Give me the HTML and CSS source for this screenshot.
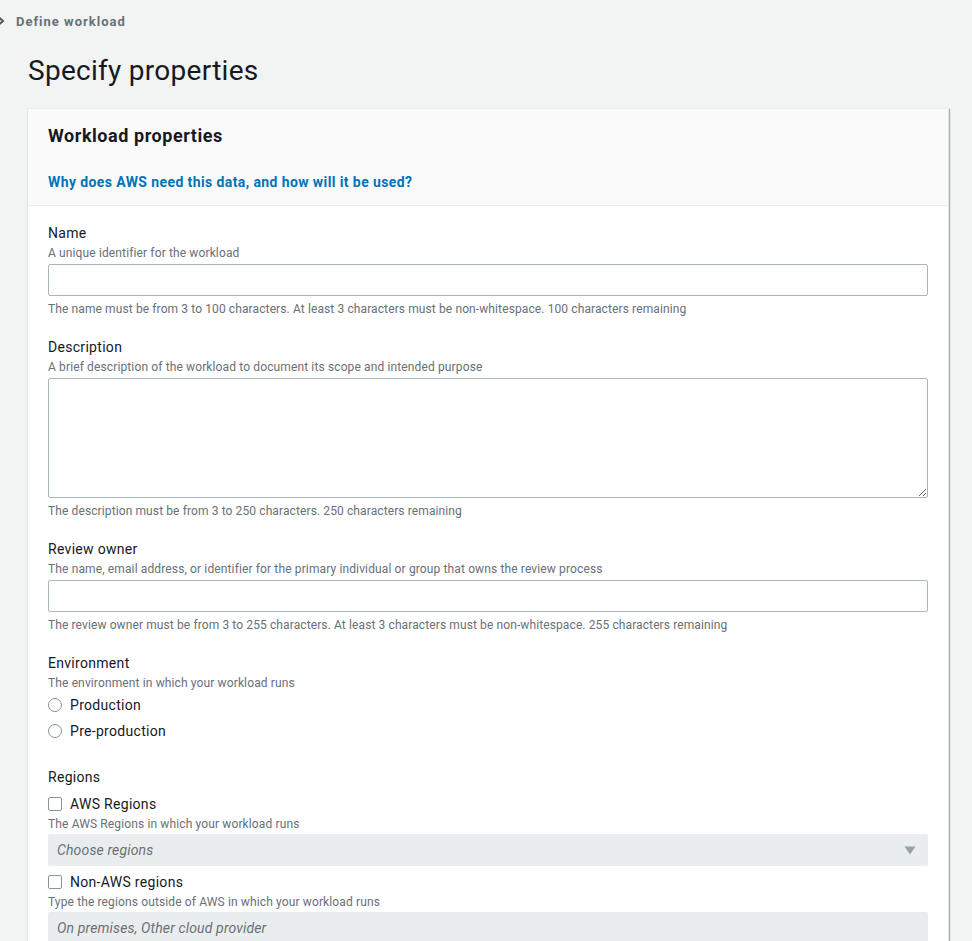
FILE: index.html
```html
<!DOCTYPE html>
<html>
<head>
<meta charset="utf-8">
<link rel="stylesheet" href="styles.css">
</head>
<body>
<nav class="crumbs">
  <svg class="chev" width="8" height="10" viewBox="0 0 8 10"><path d="M1 1.5 L5 5 L1 8.5" fill="none" stroke="#545b64" stroke-width="2"/></svg>
  <span class="crumb">Define workload</span>
</nav>
<h1 class="title">Specify properties</h1>
<section class="card">
  <header class="card-head">
    <h2 class="card-title">Workload properties</h2>
    <a class="info-link" href="#">Why does AWS need this data, and how will it be used?</a>
  </header>
  <div class="card-body">
    <div class="field">
      <div class="label">Name</div>
      <div class="desc">A unique identifier for the workload</div>
      <input class="input" type="text">
      <div class="constraint">The name must be from 3 to 100 characters. At least 3 characters must be non-whitespace. 100 characters remaining</div>
    </div>
    <div class="field">
      <div class="label">Description</div>
      <div class="desc">A brief description of the workload to document its scope and intended purpose</div>
      <textarea class="textarea"></textarea>
      <div class="constraint">The description must be from 3 to 250 characters. 250 characters remaining</div>
    </div>
    <div class="field">
      <div class="label">Review owner</div>
      <div class="desc">The name, email address, or identifier for the primary individual or group that owns the review process</div>
      <input class="input" type="text">
      <div class="constraint">The review owner must be from 3 to 255 characters. At least 3 characters must be non-whitespace. 255 characters remaining</div>
    </div>
    <div class="field env">
      <div class="label">Environment</div>
      <div class="desc">The environment in which your workload runs</div>
      <label class="opt"><span class="radio"></span>Production</label>
      <label class="opt"><span class="radio"></span>Pre-production</label>
    </div>
    <div class="field regions">
      <div class="label">Regions</div>
      <label class="chk first"><span class="check"></span>AWS Regions</label>
      <div class="desc">The AWS Regions in which your workload runs</div>
      <div class="select"><span class="ph">Choose regions</span>
        <svg width="12" height="9" viewBox="0 0 12 9"><path d="M0.5 0.5 H11.5 L6 8.5 Z" fill="#95a5a6"/></svg>
      </div>
      <label class="chk"><span class="check"></span>Non-AWS regions</label>
      <div class="desc">Type the regions outside of AWS in which your workload runs</div>
      <div class="select"><span class="ph">On premises, Other cloud provider</span></div>
    </div>
  </div>
</section>
</body>
</html>
```
FILE: styles.css
```css
* { box-sizing: border-box; }
html, body { margin: 0; padding: 0; }
body {
  background: #f2f3f3;
  font-family: Roboto, "Liberation Sans", Arial, sans-serif;
  color: #16191f;
  overflow: hidden;
  height: 941px;
}
.crumbs {
  display: flex;
  align-items: center;
  height: 20px;
  margin-top: 11px;
}
.chev { margin-left: -2px; margin-right: 10px; }
.crumb {
  font-size: 13px;
  font-weight: 700;
  color: #687078;
  letter-spacing: 1px;
}
.title {
  margin: 22px 0 0 28px;
  font-size: 28px;
  font-weight: 400;
  line-height: 36px;
  letter-spacing: 0.28px;
  color: #16191f;
}
.card {
  margin: 19px 23px 0 27px;
  background: #fff;
  border: 1px solid #e1e4e4;
  border-top-color: #eaeded;
  box-shadow: 1px 1px 1px 0 rgba(0,28,36,0.3);
}
.card-head {
  background: #fafafa;
  border-bottom: 1px solid #eaeded;
  padding: 16px 20px 13px;
}
.card-title {
  margin: 0;
  font-size: 18px;
  font-weight: 700;
  line-height: 22px;
  letter-spacing: 0.55px;
}
.info-link {
  display: block;
  margin-top: 25px;
  font-size: 14px;
  font-weight: 700;
  line-height: 20px;
  letter-spacing: 0.4px;
  color: #0073bb;
  text-decoration: none;
}
.card-body { padding: 17px 20px 0; }
.field { margin-bottom: 20px; }
.label {
  font-size: 14px;
  line-height: 20px;
  letter-spacing: 0.3px;
  color: #16191f;
  margin-bottom: 2px;
}
.desc {
  font-size: 12px;
  line-height: 16px;
  letter-spacing: 0.13px;
  color: #687078;
  margin-bottom: 3px;
}
.input {
  display: block;
  width: 100%;
  height: 32px;
  border: 1px solid #aab7b8;
  border-radius: 2px;
  background: #fff;
  margin: 0;
}
.textarea {
  display: block;
  width: 100%;
  height: 120px;
  border: 1px solid #aab7b8;
  border-radius: 2px;
  margin: 0;
  resize: vertical;
}
.constraint {
  font-size: 12px;
  line-height: 16px;
  letter-spacing: 0.11px;
  color: #687078;
  margin-top: 5px;
}
.env .desc { margin-bottom: 1px; }
.env { margin-bottom: 23px; }
.regions .desc { margin-bottom: 2px; }
.opt, .chk {
  display: flex;
  align-items: center;
  font-size: 14px;
  line-height: 20px;
  letter-spacing: 0.3px;
  color: #16191f;
}
.opt { height: 26px; }
.chk { height: 20px; margin-top: 6px; margin-bottom: 2px; }
.chk.first { margin-top: 7px; margin-bottom: 2px; }
.radio {
  width: 14px;
  height: 14px;
  border: 1px solid #879596;
  border-radius: 50%;
  margin-right: 8px;
}
.check {
  width: 14px;
  height: 14px;
  border: 1px solid #879596;
  border-radius: 2px;
  margin-right: 8px;
}
.select {
  display: flex;
  align-items: center;
  justify-content: space-between;
  height: 32px;
  padding: 0 12px 0 9px;
  background: #eaeded;
  border-radius: 2px;
}
.ph {
  font-size: 14px;
  font-style: italic;
  letter-spacing: 0.15px;
  color: #687078;
}
```
